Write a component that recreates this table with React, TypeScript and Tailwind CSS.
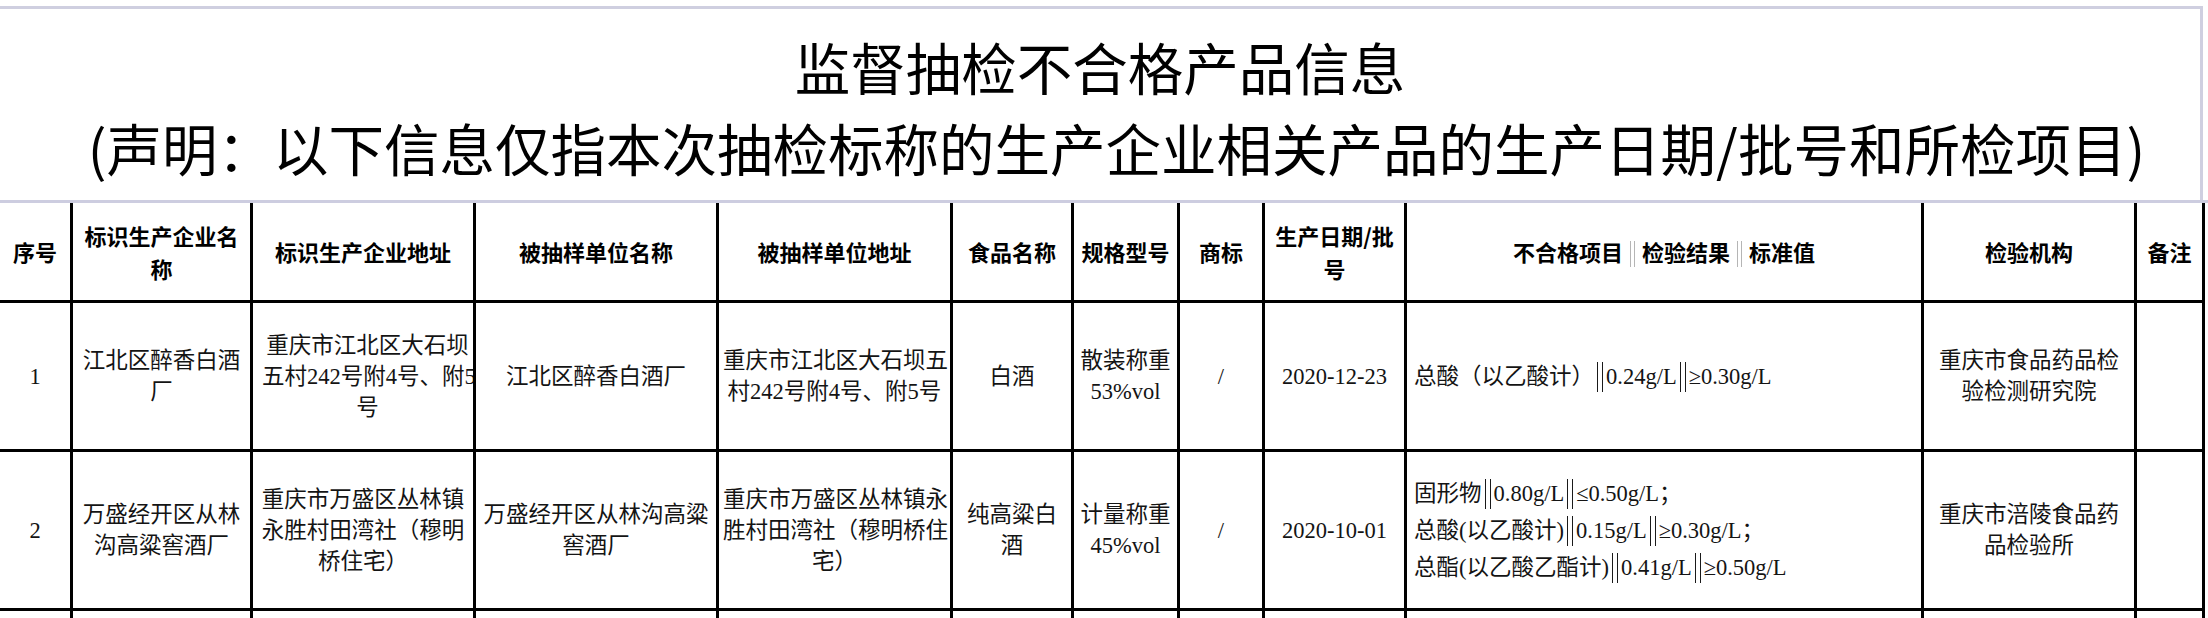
import React from "react";

const serif = "[font-family:'Liberation_Serif','DejaVu_Serif','Noto_Sans_CJK_SC',serif]";
const sans = "[font-family:'Noto_Sans_CJK_SC',sans-serif]";

function Cell({
  children,
  className = "",
}: {
  children?: React.ReactNode;
  className?: string;
}) {
  return (
    <div
      className={
        "border-r-[3px] border-b-[3px] border-black flex items-center overflow-hidden " +
        className
      }
    >
      <div className="w-full">{children}</div>
    </div>
  );
}

function Lines({ lines, className = "" }: { lines: string[]; className?: string }) {
  return (
    <div className={"text-center " + className}>
      {lines.map((l, i) => (
        <div key={i} className="whitespace-nowrap">
          {l}
        </div>
      ))}
    </div>
  );
}

function H({ lines }: { lines: string[] }) {
  return (
    <Cell className="px-[4px]">
      <Lines lines={lines} className={`${sans} font-bold text-[22px] leading-[33px] text-black`} />
    </Cell>
  );
}

function B({ lines, pl = "px-[4px]" }: { lines: string[]; pl?: string }) {
  return (
    <Cell className={pl}>
      <Lines lines={lines} className={`${serif} text-[22.5px] leading-[31px] text-[#141414]`} />
    </Cell>
  );
}

function Bar() {
  return (
    <span className="inline-block w-[6px] h-[30px] border-x-[1.5px] border-[#1a1a1a] mx-[3px] align-[-8px]" />
  );
}

function HBar() {
  return (
    <span className="inline-block w-[5px] h-[26px] border-x-[1px] border-[#b5b5b5] mx-[7px] align-[-6px]" />
  );
}

function Item({ name, val, std }: { name: string; val: string; std: string }) {
  return (
    <div className="whitespace-nowrap">
      {name}
      <Bar />
      {val}
      <Bar />
      {std}
    </div>
  );
}

export default function App() {
  const grid =
    "grid grid-cols-[73px_180px_223px_243px_234px_121px_106px_85px_142px_517px_213px_68px]";
  return (
    <div className="w-[2208px] h-[618px] overflow-hidden bg-white">
      <div className="h-[6px]" />
      <div
        className={`w-[2203px] h-[194px] border-t-[3px] border-r-[3px] border-[#cfcfe0] flex flex-col items-center justify-center pt-[4px] ${sans} text-[55.5px] leading-[81px] text-black`}
      >
        <div className="whitespace-nowrap">监督抽检不合格产品信息</div>
        <div className="whitespace-nowrap pl-[33px]">
          (声明：以下信息仅指本次抽检标称的生产企业相关产品的生产日期/批号和所检项目)
        </div>
      </div>
      <div className={`${grid} grid-rows-[100px_149px_159px_60px] border-t-[3px] border-[#cdcde0]`}>
        <H lines={["序号"]} />
        <H lines={["标识生产企业名", "称"]} />
        <H lines={["标识生产企业地址"]} />
        <H lines={["被抽样单位名称"]} />
        <H lines={["被抽样单位地址"]} />
        <H lines={["食品名称"]} />
        <H lines={["规格型号"]} />
        <H lines={["商标"]} />
        <H lines={["生产日期/批", "号"]} />
        <Cell className="px-[4px]">
          <div className={`${sans} font-bold text-[22px] leading-[33px] text-black text-center whitespace-nowrap`}>
            不合格项目
            <HBar />
            检验结果
            <HBar />
            标准值
          </div>
        </Cell>
        <H lines={["检验机构"]} />
        <H lines={["备注"]} />

        {/* Row 1 */}
        <B lines={["1"]} />
        <B lines={["江北区醉香白酒", "厂"]} />
        <B lines={["重庆市江北区大石坝", "五村242号附4号、附5", "号"]} pl="pl-[9px] pr-[0px]" />
        <B lines={["江北区醉香白酒厂"]} />
        <B lines={["重庆市江北区大石坝五", "村242号附4号、附5号"]} />
        <B lines={["白酒"]} />
        <B lines={["散装称重", "53%vol"]} />
        <B lines={["/"]} />
        <B lines={["2020-12-23"]} />
        <Cell className="pl-[7px] pr-[4px]">
          <div className={`${serif} text-[22.5px] leading-[37px] text-[#141414]`}>
            <Item name="总酸（以乙酸计）" val="0.24g/L" std="≥0.30g/L" />
          </div>
        </Cell>
        <B lines={["重庆市食品药品检", "验检测研究院"]} />
        <B lines={[""]} />

        {/* Row 2 */}
        <B lines={["2"]} />
        <B lines={["万盛经开区从林", "沟高粱窖酒厂"]} />
        <B lines={["重庆市万盛区丛林镇", "永胜村田湾社（穆明", "桥住宅）"]} />
        <B lines={["万盛经开区从林沟高粱", "窖酒厂"]} />
        <B lines={["重庆市万盛区丛林镇永", "胜村田湾社（穆明桥住", "宅）"]} />
        <B lines={["纯高粱白", "酒"]} />
        <B lines={["计量称重", "45%vol"]} />
        <B lines={["/"]} />
        <B lines={["2020-10-01"]} />
        <Cell className="pl-[7px] pr-[4px]">
          <div className={`${serif} text-[22.5px] leading-[37px] text-[#141414]`}>
            <Item name="固形物" val="0.80g/L" std="≤0.50g/L；" />
            <Item name="总酸(以乙酸计)" val="0.15g/L" std="≥0.30g/L；" />
            <Item name="总酯(以乙酸乙酯计)" val="0.41g/L" std="≥0.50g/L" />
          </div>
        </Cell>
        <B lines={["重庆市涪陵食品药", "品检验所"]} />
        <B lines={[""]} />

        {/* Row 3 (cut off) */}
        {Array.from({ length: 12 }).map((_, i) => (
          <Cell key={i} />
        ))}
      </div>
    </div>
  );
}
